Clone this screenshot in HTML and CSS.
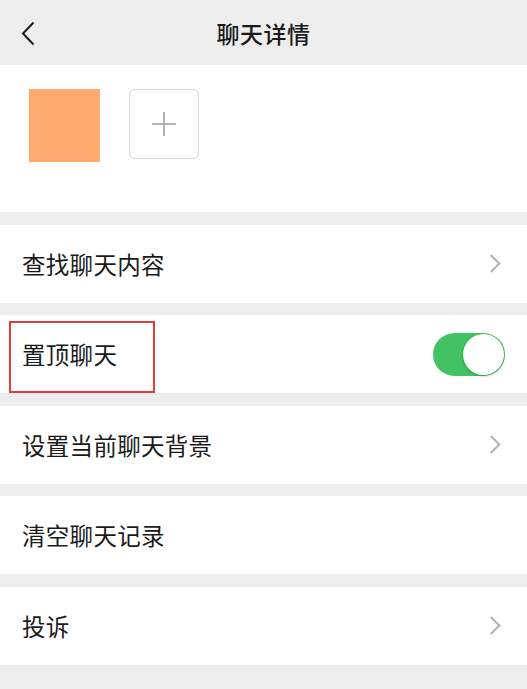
FILE: index.html
```html
<!doctype html>
<html lang="zh">
<head>
    <meta charset="UTF-8">
    <meta name="viewport" content="width=device-width, initial-scale=1.0">
    <title>聊天详情</title>
    <link rel="stylesheet" href="styles.css">
</head>
<body>
<div class="page">
    <div class="header">
        <span class="header-back">
            <svg width="14" height="25" viewBox="0 0 14 25"><path d="M12.5 1.5 L2 12.5 L12.5 23.5" fill="none" stroke="#1a1a1a" stroke-width="2"/></svg>
        </span>
        <span class="header-title">聊天详情</span>
    </div>

    <div class="members">
        <div class="member-avatar"></div>
        <div class="member-add">
            <svg width="26" height="26" viewBox="0 0 26 26"><path d="M13 1 V25 M1 13 H25" stroke="#b5b5b5" stroke-width="2"/></svg>
        </div>
    </div>

    <div class="cell">
        <span class="cell-text">查找聊天内容</span>
        <span class="cell-arrow"></span>
    </div>

    <div class="cell cell-marked">
        <span class="cell-text">置顶聊天</span>
        <span class="switch"><span class="switch-knob"></span></span>
        <span class="mark-box"></span>
    </div>

    <div class="cell">
        <span class="cell-text">设置当前聊天背景</span>
        <span class="cell-arrow"></span>
    </div>

    <div class="cell">
        <span class="cell-text">清空聊天记录</span>
    </div>

    <div class="cell">
        <span class="cell-text">投诉</span>
        <span class="cell-arrow"></span>
    </div>
</div>
</body>
</html>
```

FILE: styles.css
```css
* {
    margin: 0;
    padding: 0;
    box-sizing: border-box;
}
html, body {
    background: #ededed;
}
body {
    font-family: "Noto Sans CJK SC", "Liberation Sans", sans-serif;
    color: #1a1a1a;
}
.page {
    width: 527px;
    min-height: 689px;
}
.header {
    height: 65px;
    display: flex;
    align-items: center;
    justify-content: center;
    position: relative;
    background: #ededed;
}
.header-back {
    position: absolute;
    left: 21px;
    top: 21px;
    display: flex;
}
.header-title {
    font-size: 23px;
    font-weight: 500;
    letter-spacing: 0.5px;
}
.members {
    height: 147px;
    background: #fff;
    display: flex;
    align-items: flex-start;
    padding: 24px 0 0 29px;
    gap: 29px;
}
.member-avatar {
    width: 71px;
    height: 73px;
    background: #ffab70;
}
.member-add {
    width: 70px;
    height: 70px;
    border: 1px solid #d6d6d6;
    border-radius: 6px;
    display: flex;
    align-items: center;
    justify-content: center;
}
.cell {
    height: 78px;
    margin-top: 12.5px;
    background: #fff;
    display: flex;
    align-items: center;
    justify-content: space-between;
    padding: 0 25px 0 22px;
    position: relative;
}
.cell-text {
    font-size: 23.5px;
    letter-spacing: 0.3px;
}
.cell-arrow {
    width: 13px;
    height: 13px;
    border-top: 2px solid #b2b2b2;
    border-right: 2px solid #b2b2b2;
    transform: rotate(45deg);
    margin-right: 4px;
}
.cell-marked {
    padding-right: 22px;
}
.switch {
    width: 72px;
    height: 43px;
    border-radius: 22px;
    background: #42c262;
    position: relative;
}
.switch-knob {
    position: absolute;
    right: 1px;
    top: 1px;
    width: 41px;
    height: 41px;
    border-radius: 50%;
    background: #fff;
    box-shadow: 0 1px 3px rgba(0,0,0,.25);
}
.mark-box {
    position: absolute;
    left: 9px;
    top: 6px;
    width: 146px;
    height: 72px;
    border: 2px solid #e5393c;
}
```
